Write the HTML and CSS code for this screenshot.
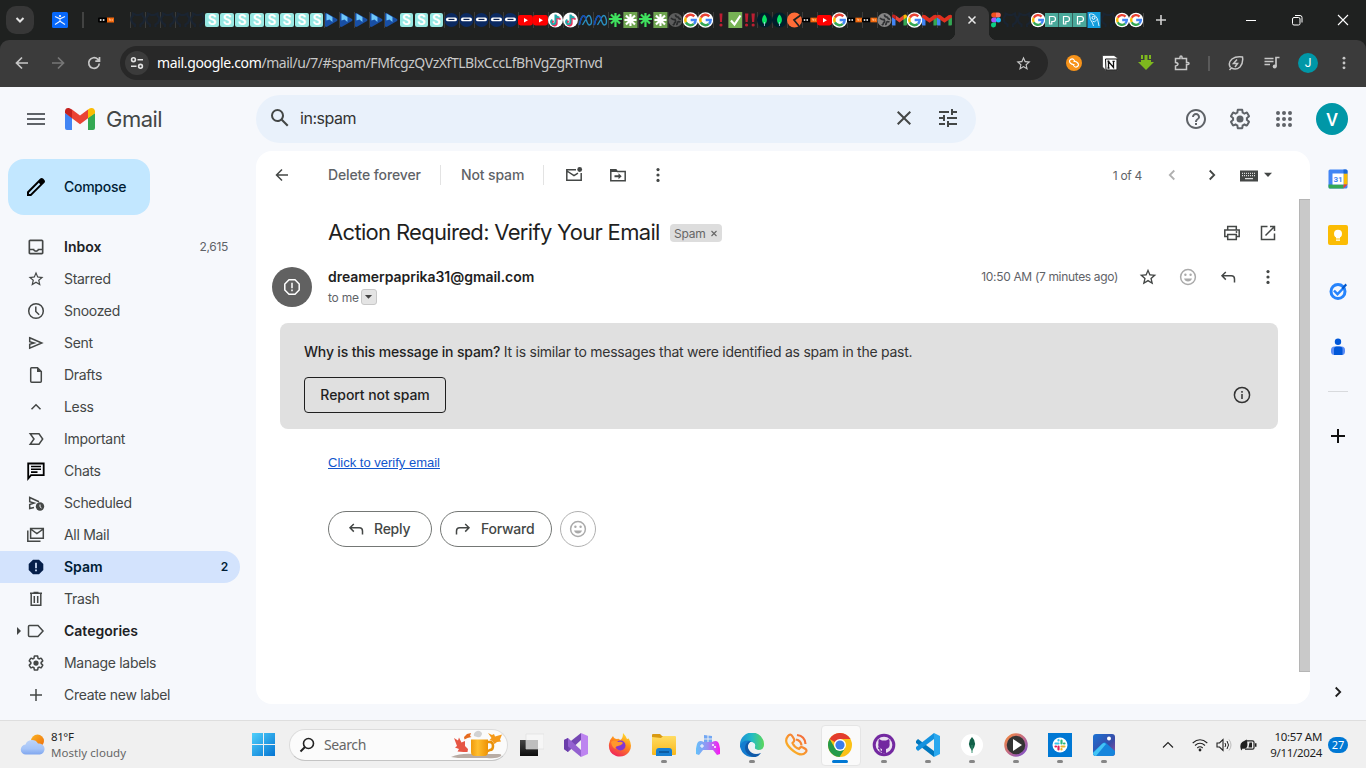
FILE: index.html
```html
<!DOCTYPE html>
<html lang="en">
<head>
<meta charset="utf-8">
<title>Gmail</title>
<link rel="stylesheet" href="styles.css">
</head>
<body>
<svg class="defs" aria-hidden="true">
  <defs>
    <linearGradient id="gWin" x1="0" y1="0" x2="1" y2="1"><stop offset="0" stop-color="#4fd0fb"/><stop offset="1" stop-color="#0474d2"/></linearGradient>
    <linearGradient id="gSun" x1="0" y1="0" x2="1" y2="1"><stop offset="0" stop-color="#fbb523"/><stop offset="1" stop-color="#ee6c0c"/></linearGradient>
    <linearGradient id="gCloud" x1="0" y1="0" x2="0" y2="1"><stop offset="0" stop-color="#bcd3f8"/><stop offset=".6" stop-color="#a5c4f8"/><stop offset="1" stop-color="#7fa6ee"/></linearGradient>
    <linearGradient id="gFold" x1="0" y1="0" x2="0" y2="1"><stop offset="0" stop-color="#ffdc63"/><stop offset="1" stop-color="#f9b81b"/></linearGradient>
    <linearGradient id="gPad"><stop offset="0" stop-color="#62c3fa"/><stop offset=".5" stop-color="#9a8df2"/><stop offset="1" stop-color="#ff12f2"/></linearGradient>
    <linearGradient id="gEdge" x1="0" y1="0" x2="1" y2="0"><stop offset="0" stop-color="#1a8fd8"/><stop offset=".5" stop-color="#23bcc5"/><stop offset="1" stop-color="#5bd75b"/></linearGradient>
    <linearGradient id="gCall" x1="0" y1="1" x2="1" y2="0"><stop offset="0" stop-color="#fdc51f"/><stop offset="1" stop-color="#f2603f"/></linearGradient>
    <linearGradient id="gRing" x1="0" y1="0" x2="1" y2="1"><stop offset="0" stop-color="#f58a3c"/><stop offset=".5" stop-color="#c26a86"/><stop offset="1" stop-color="#7a4fd0"/></linearGradient>
    <linearGradient id="gPhoto" x1="0" y1="0" x2="1" y2="1"><stop offset="0" stop-color="#1a72d4"/><stop offset=".6" stop-color="#3a4ba6"/><stop offset="1" stop-color="#9a4f9c"/></linearGradient>
    <linearGradient id="gFox" x1=".8" y1="0" x2=".3" y2="1"><stop offset="0" stop-color="#ffe52e"/><stop offset=".45" stop-color="#ff8a1c"/><stop offset="1" stop-color="#f0225b"/></linearGradient>
    <linearGradient id="gMug"><stop offset="0" stop-color="#f09a0c"/><stop offset=".4" stop-color="#ffbe2e"/><stop offset="1" stop-color="#ee9205"/></linearGradient>
    <linearGradient id="gDark" x1="0" y1="0" x2="0" y2="1"><stop offset="0" stop-color="#444"/><stop offset="1" stop-color="#0d0d0d"/></linearGradient>
  </defs>
  <symbol id="f-gh" viewBox="0 0 14 16"><path d="M4.500 15v-2.500C0 11 0 5 2.300 4L2.500 1.500 5.500 3h3.500l3-1.500.2 2.500c2.300 1 2.300 7-2.200 8.500V15" fill="none" stroke="#1a2431" stroke-width="2.200"/></symbol>
  <symbol id="f-arrow" viewBox="0 0 14 16"><path d="M.500 2Q1 .500 3 1.500l9.500 5.500q1 1 0 2L3 14.500Q1 15.500.500 14z" fill="#184fa5"/><path d="M2 1.500l6 3.500v5L5 7.500 2 8.500z" fill="#70c8fb"/></symbol>
  <symbol id="f-ninja" viewBox="0 0 14 16"><circle cx="7" cy="8" r="7" fill="#0b2a62"/><rect x="1.500" y="5.500" width="11" height="3.800" rx="1.900" fill="#fff"/><path d="M4 7.400h6" stroke="#0b2250" stroke-width="1.200"/></symbol>
  <symbol id="f-yt" viewBox="0 0 15 16"><rect y="3" width="15" height="10.500" rx="2.500" fill="#f00"/><path d="M6 6v4.600l4-2.300z" fill="#fff"/></symbol>
  <symbol id="f-tt" viewBox="0 0 15 16"><circle cx="7.500" cy="8" r="7.500" fill="#fff"/><g fill="none" stroke-width="2"><path d="M8 3v7.500a2.200 2.200 0 1 1-3-2.200M8 3q.500 3 4 3" stroke="#ee2b57" transform="translate(.7 .9)"/><path d="M8 3v7.500a2.200 2.200 0 1 1-3-2.200M8 3q.500 3 4 3" stroke="#23a8a8" transform="translate(-.5 -.4)"/></g></symbol>
  <symbol id="f-meta" viewBox="0 0 14 16"><path d="M.800 13C2 8 3.500 3.200 5.500 3.800 8 4.500 8 13 11 13c2.500 0 2.500-4.500 1-8-1.500-3-3.500-1-5 3L4 13" fill="none" stroke="#2a8fc0" stroke-width="1.400"/><path d="M.800 13C2 8 3.500 3.200 5.500 3.800 6.500 4 7 5.500 7.500 7.500" fill="none" stroke="#154bb5" stroke-width="1.500"/></symbol>
  <symbol id="f-star" viewBox="0 0 14 16"><path d="M7 1v14M.500 7h13M2.500 2.500l9 9M11.500 2.500l-9 9" stroke="#3fe25e" stroke-width="2.200"/></symbol>
  <symbol id="f-wstar" viewBox="0 0 14 16"><path d="M0 0h14v16H0z" fill="#6da34e"/><path d="M7 2v12M1 8h12M2.500 3.500l9 9M11.500 3.500l-9 9" stroke="#fff" stroke-width="2.200"/></symbol>
  <symbol id="f-globe" viewBox="0 0 14 16"><circle cx="7" cy="8" r="7" fill="#868686"/><path d="M2.500 6q2 2 4 1.500Q8 9.500 6 11q-.500 2.500-1.500 1M7 2.500q0 2.500 2.500 2.500 1 2 3 2.500M12 10q-2.500-1-3 .500 0 2-1.500 2" fill="none" stroke="#303234" stroke-width="1.700"/></symbol>
  <symbol id="f-g" viewBox=".5 0 15 16"><circle cx="8" cy="8" r="7.800" fill="#fff"/><g fill="none" stroke-width="2.500"><path d="M11.800 4.400A5.200 5.200 0 0 0 3.400 5.600" stroke="#ea4335"/><path d="M3.400 5.600a5.200 5.200 0 0 0 0 4.800" stroke="#fbbc05"/><path d="M3.400 10.400a5.200 5.200 0 0 0 8 1.500" stroke="#34a853"/><path d="M11.400 11.900A5.200 5.200 0 0 0 13.200 8H8.200" stroke="#4285f4"/></g></symbol>
  <symbol id="f-ex" viewBox="0 0 14 16"><path d="M6 1.500h3L8.500 10h-2z" fill="#bb1e32"/><circle cx="7.500" cy="13" r="1.600" fill="#bb1e32"/></symbol>
  <symbol id="f-ex2" viewBox="0 0 14 16"><path d="M2.500 1.500h3.400L5.200 10H3.100zM9 1.500h3.400l-.7 8.500H9.600z" fill="#bb1e32"/><circle cx="4.100" cy="13" r="1.600" fill="#bb1e32"/><circle cx="10.700" cy="13" r="1.600" fill="#bb1e32"/></symbol>
  <symbol id="f-check" viewBox="0 0 14 16"><path d="M0 0h14v16H0z" fill="#77b255"/><path d="M2.500 8.500l3.500 4 6-9" fill="none" stroke="#fff" stroke-width="2.200"/></symbol>
  <symbol id="f-mongo" viewBox="0 0 14 16"><circle cx="7" cy="8" r="7.500" fill="#001e2b"/><path d="M7 2.500C3.500 6 4 10.500 7 12.500c3-2 3.500-6.500 0-10z" fill="#08e162"/><path d="M7 10v4" stroke="#bce" stroke-width=".8"/></symbol>
  <symbol id="f-orange" viewBox="0 0 15 16"><circle cx="7.500" cy="8" r="7.500" fill="#ff6c37"/><path d="M14 3L7 8l5 6" fill="none" stroke="#202221" stroke-width="1.700"/></symbol>
  <symbol id="f-oreilly" viewBox="0 0 16 16"><rect y="5.500" width="9" height="5" rx="1" fill="#000"/><path d="M9 5.500h7v5H9z" fill="#f4690c"/><circle cx="2.700" cy="8" r="1" fill="#ddd"/><circle cx="5.600" cy="8" r="1" fill="#ddd"/><path d="M11 7h1v2M13.500 8H15" fill="none" stroke="#ffd7b5" stroke-width=".9"/></symbol>
  <symbol id="f-figma" viewBox="0 0 10 16"><path d="M2.700.500H5v5H2.700a2.500 2.500 0 0 1 0-5z" fill="#f24e1e"/><path d="M5 .500h2.300a2.500 2.500 0 0 1 0 5H5z" fill="#ff7262"/><path d="M2.700 5.500H5v5H2.700a2.500 2.500 0 0 1 0-5z" fill="#a259ff"/><circle cx="7.400" cy="8" r="2.500" fill="#1abcfe"/><path d="M2.700 10.500H5V13a2.500 2.500 0 1 1-2.300-2.500z" fill="#0acf83"/></symbol>
  <symbol id="f-p" viewBox="0 0 14 16"><path d="M0 1h13.500v14H0z" fill="#4aa99b"/><path d="M4.500 12V4.500H8q2.500 0 2.500 2.500T8 9.500H6.800V12z" fill="none" stroke="#fff" stroke-width="1.200"/></symbol>
  <symbol id="f-rocket" viewBox="0 0 13 16"><path d="M0 0h13v16H0z" fill="#129ddd"/><path d="M2 2q5-1 8 5l1.500 7M2 2q0 6 3 9l1 3M10 7l-3 3-2-1" fill="none" stroke="#d7f1ff"/><circle cx="6" cy="5.800" r="1.500" fill="none" stroke="#fff"/></symbol>
  <symbol id="f-mail" viewBox="0 0 30 22"><path d="M0 5v15q0 2 2 2h5V9.500z" fill="#4285f4"/><path d="M23 9.500V22h5q2 0 2-2V5z" fill="#34a853"/><path d="M7 10.200V1.500l8 6 8-6v8.700l-8 6z" fill="#ea4335"/><path d="M0 5.500V3Q.500-.500 4 .100L7 1.500v8.700L0 5z" fill="#c5221f"/><path d="M23 1.500l2-1.200Q29-.900 30 3v2.300l-7 5z" fill="#fbbc04"/></symbol>
  <symbol id="f-mred" viewBox="0 0 30 22"><path d="M0 5v15q0 2 2 2h5V9.500z" fill="#4285f4"/><path d="M23 9.500V22h5q2 0 2-2V5z" fill="#34a853"/><path d="M0 6V2q3-3 7-.500l8 6 8-6Q28-1 30 2v4l-7 5-8 5.500L7 11z" fill="#e0301f"/></symbol>

  <symbol id="menu" viewBox="0 0 24 24"><path d="M3 18h18v-2H3zm0-5h18v-2H3zm0-7v2h18V6z"/></symbol>
  <symbol id="search" viewBox="0 0 24 24"><path d="M20.490 19l-5.730-5.730C15.530 12.200 16 10.910 16 9.500A6.500 6.500 0 1 0 9.500 16c1.410 0 2.700-.47 3.770-1.240L19 20.490 20.490 19zM5 9.500C5 7.010 7.010 5 9.500 5S14 7.010 14 9.500 11.990 14 9.500 14 5 11.990 5 9.500z"/></symbol>
  <symbol id="close" viewBox="0 0 24 24"><path d="M19 6.410L17.590 5 12 10.590 6.410 5 5 6.410 10.590 12 5 17.590 6.410 19 12 13.410 17.590 19 19 17.590 13.410 12z"/></symbol>
  <symbol id="tune" viewBox="0 0 24 24"><path d="M3 17v2h6v-2H3zM3 5v2h10V5H3zm10 16v-2h8v-2h-8v-2h-2v6h2zM7 9v2H3v2h4v2h2V9H7zm14 4v-2H11v2h10zm-6-4h2V7h4V5h-4V3h-2v6z"/></symbol>
  <symbol id="help" viewBox="0 0 24 24"><path d="M11 18h2v-2h-2v2zm1-16C6.480 2 2 6.480 2 12s4.480 10 10 10 10-4.480 10-10S17.520 2 12 2zm0 18c-4.410 0-8-3.590-8-8s3.590-8 8-8 8 3.590 8 8-3.590 8-8 8zm0-14c-2.210 0-4 1.790-4 4h2c0-1.100.9-2 2-2s2 .9 2 2c0 2-3 1.750-3 5h2c0-2.250 3-2.500 3-5 0-2.210-1.790-4-4-4z"/></symbol>
  <symbol id="gear" viewBox="0 0 24 24"><path d="M13.850 22.250h-3.700c-.74 0-1.360-.54-1.450-1.270l-.27-1.890c-.27-.14-.53-.29-.79-.46l-1.800.72c-.7.26-1.470-.03-1.810-.65L2.200 15.530c-.35-.66-.2-1.440.36-1.880l1.530-1.190c-.01-.15-.02-.3-.02-.46 0-.15.010-.31.020-.46l-1.520-1.190c-.59-.45-.74-1.260-.37-1.880l1.850-3.190c.34-.62 1.110-.9 1.790-.63l1.810.73c.26-.17.520-.32.780-.46l.27-1.910c.09-.7.710-1.250 1.440-1.250h3.700c.74 0 1.360.54 1.450 1.270l.27 1.890c.27.14.530.29.790.46l1.800-.72c.71-.26 1.480.03 1.820.65l1.840 3.180c.36.66.2 1.440-.36 1.880l-1.520 1.190c.01.15.020.3.020.46s-.01.310-.02.46l1.520 1.190c.56.45.720 1.230.37 1.860l-1.860 3.220c-.34.620-1.110.9-1.800.63l-1.800-.72c-.26.17-.52.320-.78.460l-.27 1.910c-.1.680-.72 1.220-1.460 1.220zm-3.230-2h2.760l.37-2.550.53-.22c.44-.18.880-.44 1.340-.78l.45-.34 2.380.96 1.380-2.400-2.030-1.580.07-.56c.03-.26.060-.51.060-.78s-.03-.53-.06-.78l-.07-.56 2.030-1.580-1.390-2.400-2.390.96-.45-.35c-.42-.32-.87-.58-1.330-.77l-.52-.22-.37-2.550h-2.760l-.37 2.550-.53.210c-.44.190-.88.440-1.340.790l-.45.330-2.380-.95-1.390 2.390 2.030 1.580-.07.560a7 7 0 0 0-.06.790c0 .26.020.530.060.780l.07.560-2.030 1.580 1.380 2.400 2.390-.96.450.350c.43.330.86.580 1.330.770l.53.220.38 2.550z"/><circle cx="12" cy="12" r="3.500"/></symbol>
  <symbol id="apps" viewBox="0 0 24 24"><path d="M6 8a2 2 0 1 0 0-4 2 2 0 0 0 0 4m6 12a2 2 0 1 0 0-4 2 2 0 0 0 0 4m-6 0a2 2 0 1 0 0-4 2 2 0 0 0 0 4m0-6a2 2 0 1 0 0-4 2 2 0 0 0 0 4m6 0a2 2 0 1 0 0-4 2 2 0 0 0 0 4m4-8a2 2 0 1 0 4 0 2 2 0 0 0-4 0m-4 2a2 2 0 1 0 0-4 2 2 0 0 0 0 4m6 6a2 2 0 1 0 0-4 2 2 0 0 0 0 4m0 6a2 2 0 1 0 0-4 2 2 0 0 0 0 4"/></symbol>
  <symbol id="pen" viewBox="0 0 24 24"><path d="M20.410 4.940l-1.350-1.350c-.78-.78-2.050-.78-2.830 0L3 16.820V21h4.180L20.410 7.770c.79-.78.790-2.050 0-2.830zM6.410 19.060L5 19v-1.360l9.820-9.820 1.410 1.410-9.820 9.830z"/></symbol>
  <symbol id="inbox" viewBox="0 0 24 24"><path d="M19 3H5c-1.100 0-2 .9-2 2v14c0 1.100.9 2 2 2h14c1.100 0 2-.9 2-2V5c0-1.100-.9-2-2-2zm0 16H5v-3h3.560c.69 1.190 1.970 2 3.450 2s2.750-.81 3.450-2H19v3zm0-5h-4.990c0 1.100-.9 2-2 2s-2-.9-2-2H5V5h14v9z"/></symbol>
  <symbol id="star" viewBox="0 0 24 24"><path d="M22 9.240l-7.190-.62L12 2 9.190 8.630 2 9.240l5.460 4.730L5.820 21 12 17.270 18.180 21l-1.630-7.030L22 9.240zM12 15.400l-3.760 2.270 1-4.280-3.320-2.880 4.380-.38L12 6.100l1.710 4.040 4.380.38-3.320 2.880 1 4.280L12 15.400z"/></symbol>
  <symbol id="clock" viewBox="0 0 20 20"><circle cx="10" cy="10" r="7.300" class="s"/><path d="M9.800 5.500V10.500l3.400 3.200" class="s"/></symbol>
  <symbol id="sent" viewBox="0 0 20 20"><path d="M3.700 4.800L15.800 10 3.700 15.200V11.200L8 10 3.700 8.800z" class="s"/></symbol>
  <symbol id="draft" viewBox="0 0 20 20"><path d="M5.500 2.800H11.500L15.300 6.500V16.200q0 1-1 1H5.700q-1 0-1-1V3.800q0-1 .8-1z" class="s"/><path d="M11 2.500l4.500 4.500H11z"/></symbol>
  <symbol id="less" viewBox="0 0 20 20"><path d="M5.500 12.300L10 7.800l4.500 4.500" class="s"/></symbol>
  <symbol id="important" viewBox="0 0 20 20"><path d="M4.200 4.700H13L16.700 10 13 15.300H4.200L8 10z" class="s"/></symbol>
  <symbol id="chat" viewBox="0 0 20 20"><path d="M2.200 17.500V2.500h15.500v11.700H5z" fill="none" stroke="currentColor" stroke-width="1.800"/><path d="M5 5.500h10M5 8.300h10M5 11.100h6.500" stroke="currentColor" stroke-width="1.600"/></symbol>
  <symbol id="sched" viewBox="0 0 20 20"><path d="M8 14.500l-4.300 1V11.500L8 10 3.700 8.800V4.500L13 8.700" class="s"/><circle cx="14" cy="13.500" r="4.200"/><path d="M14 11.500v2.300l1.500 1.200" fill="none" stroke="#f6f8fc"/></symbol>
  <symbol id="all" viewBox="0 0 20 20"><path d="M4.600 3.500h12.700v9.800H4.600zM4.600 4l6.300 4.500L17.300 4M1.800 5.500v10.700h12.700" class="s"/></symbol>
  <symbol id="spam" viewBox="0 0 20 20"><path d="M7 2.700h6L17.300 7v6L13 17.300H7L2.700 13V7z"/><path d="M10 5.700v5.600M10 12.500v1.800" stroke="#d3e3fd" stroke-width="1.700"/></symbol>
  <symbol id="trash" viewBox="0 0 20 20"><path d="M4 4.300h12M7.500 3.500h5M5.200 4.500v11.700h9.600V4.500M8.300 7v7M11.700 7v7" class="s"/></symbol>
  <symbol id="tag" viewBox="0 0 20 20"><path d="M3.500 4.600H12L17 10l-5 5.400H3.500q-1 0-1-1V5.600q0-1 1-1z" class="s"/></symbol>
  <symbol id="plus" viewBox="0 0 20 20"><path d="M10 4v12M4 10h12" class="s"/></symbol>
  <symbol id="back" viewBox="0 0 20 20"><path d="M16 10H4.500M10 4.500L4.500 10 10 15.500" class="s"/></symbol>
  <symbol id="unread" viewBox="0 0 20 20"><path d="M12 4.800H2.800v10.400h14.400V8M3 6l7 4.700 4-2.500" class="s"/><circle cx="15.700" cy="4.500" r="2.400"/></symbol>
  <symbol id="move" viewBox="0 0 20 20"><path d="M2.800 4.800h5l1.500 1.700h7.900v9.200H2.800z" class="s"/><path d="M2 4h6l2 3H2zM6.500 10.200h4V8.200l3.200 3-3.200 3v-2h-4z"/></symbol>
  <symbol id="dots" viewBox="0 0 20 20"><circle cx="10" cy="4.600" r="1.600"/><circle cx="10" cy="10" r="1.600"/><circle cx="10" cy="15.400" r="1.600"/></symbol>
  <symbol id="chev" viewBox="0 0 20 20"><path d="M7.700 5.500l4.500 4.500-4.500 4.500" fill="none" stroke="currentColor" stroke-width="1.800"/></symbol>
  <symbol id="down" viewBox="0 0 10 6"><path d="M1 .800h8L5 5z"/></symbol>
  <symbol id="kbd" viewBox="0 0 18 12"><path d="M0 .500h18v11H0z"/><path d="M2 3.300h14M2 5.700h14" stroke="#fff" stroke-dasharray="1 1"/><path d="M5 8.700h8" stroke="#fff"/></symbol>
  <symbol id="print" viewBox="0 0 20 20"><path d="M5.700 6.500V3.500h8.600v3M5.700 13.500H2.800V7h14.400v6.500h-2.900M5.700 11.500h8.600v5H5.700z" class="s"/><circle cx="14.500" cy="9" r=".9"/></symbol>
  <symbol id="open" viewBox="0 0 20 20"><path d="M9.500 3.500h-6v13h13v-6M12 3.500h4.500V8M16.500 3.500L7.500 12.500" class="s"/></symbol>
  <symbol id="smile" viewBox="0 0 20 20"><circle cx="10" cy="10" r="7.400" class="s"/><circle cx="7.400" cy="7.800" r="1.200"/><circle cx="12.600" cy="7.800" r="1.200"/><path d="M6 11.600h8q-1 3-4 3t-4-3z"/></symbol>
  <symbol id="reply" viewBox="0 0 20 20"><path d="M16.500 15.500V12q0-3.200-3.200-3.200H4.200M7.800 5L4 8.800l3.800 3.800" class="s"/></symbol>
  <symbol id="oct" viewBox="0 0 20 20"><path d="M7 2.800h6L17.200 7v6L13 17.200H7L2.800 13V7zM10 5.800v5.400M10 12.500v1.700" class="s"/></symbol>
  <symbol id="info" viewBox="0 0 20 20"><circle cx="10" cy="10" r="7.600" class="s"/><path d="M10 9v5M10 6v1.700" class="s"/></symbol>
</svg>

<header class="tabstrip">
  <div class="tab-search"><svg width="12" height="12" viewBox="0 0 12 12"><path d="M2.500 4L6 7.500 9.500 4" fill="none" stroke="#e3e3e3" stroke-width="2"/></svg></div>
  <div class="pinned"><svg width="16" height="16" viewBox="0 0 16 16"><rect width="16" height="16" rx="1.500" fill="#0768fa"/><path d="M3 4.500l5 2.300 5-2.300M8 6.500v3M3 12.500l5-3.300 5 3.300" fill="none" stroke="#e8f0ff" stroke-width="1.100"/><circle cx="8" cy="4" r="1.100" fill="#fff"/></svg></div>
  <i class="pin-sep"></i>
  <svg class="pin-or"><use href="#f-oreilly"/></svg>
  <div class="favs">
    <svg><use href="#f-gh"/></svg><svg><use href="#f-gh"/></svg><svg><use href="#f-gh"/></svg><svg><use href="#f-gh"/></svg><svg><use href="#f-gh"/></svg>
    <b>S</b><b>S</b><b>S</b><b>S</b><b>S</b><b>S</b><b>S</b><b>S</b>
    <svg><use href="#f-arrow"/></svg><svg><use href="#f-arrow"/></svg><svg><use href="#f-arrow"/></svg><svg><use href="#f-arrow"/></svg><svg><use href="#f-arrow"/></svg>
    <b>S</b><b>S</b><b>S</b>
    <svg><use href="#f-ninja"/></svg><svg><use href="#f-ninja"/></svg><svg><use href="#f-ninja"/></svg><svg><use href="#f-ninja"/></svg><svg><use href="#f-ninja"/></svg>
    <svg><use href="#f-yt"/></svg><svg><use href="#f-yt"/></svg><svg><use href="#f-tt"/></svg><svg><use href="#f-tt"/></svg><svg><use href="#f-meta"/></svg><svg><use href="#f-meta"/></svg>
    <svg><use href="#f-star"/></svg><svg><use href="#f-wstar"/></svg><svg><use href="#f-star"/></svg><svg><use href="#f-wstar"/></svg><svg class="dim"><use href="#f-globe"/></svg>
    <svg><use href="#f-g"/></svg><svg><use href="#f-g"/></svg><svg><use href="#f-ex"/></svg><svg><use href="#f-check"/></svg><svg><use href="#f-ex2"/></svg>
    <svg><use href="#f-mongo"/></svg><svg><use href="#f-mongo"/></svg><svg><use href="#f-orange"/></svg><svg><use href="#f-oreilly"/></svg><svg><use href="#f-yt"/></svg><svg><use href="#f-g"/></svg>
    <svg><use href="#f-oreilly"/></svg><svg><use href="#f-oreilly"/></svg><svg><use href="#f-globe"/></svg><svg><use href="#f-mail"/></svg><svg><use href="#f-g"/></svg><svg><use href="#f-mred"/></svg><svg><use href="#f-mred"/></svg>
  </div>
  <div class="active-tab"><svg width="10" height="10" viewBox="0 0 10 10"><path d="M1.500 1.500l7 7M8.500 1.500l-7 7" stroke="#e8e8e8" stroke-width="1.500"/></svg></div>
  <div class="favs right">
    <svg><use href="#f-figma"/></svg><svg><use href="#f-gh"/></svg><svg><use href="#f-gh"/></svg><svg><use href="#f-g"/></svg><svg><use href="#f-p"/></svg><svg><use href="#f-p"/></svg><svg><use href="#f-p"/></svg><svg><use href="#f-rocket"/></svg><svg><use href="#f-gh"/></svg><svg><use href="#f-g"/></svg><svg><use href="#f-g"/></svg>
  </div>
  <i class="end-sep"></i>
  <svg class="newtab" viewBox="0 0 12 12"><path d="M6 1v10M1 6h10" stroke="#d0d0d0" stroke-width="1.600"/></svg>
  <div class="winctl">
    <svg viewBox="0 0 12 12"><path d="M1 6.500h10" stroke="#fff"/></svg>
    <svg viewBox="0 0 12 12"><rect x="1.500" y="3.500" width="7.500" height="7.500" rx="1.500" fill="none" stroke="#fff"/><path d="M4 1.500h5q2 0 2 2v5" fill="none" stroke="#fff"/></svg>
    <svg viewBox="0 0 12 12"><path d="M1 1l10 10M11 1L1 11" stroke="#fff" stroke-width="1.100"/></svg>
  </div>
</header>

<div class="toolbar-bg">
<nav class="toolbar">
  <svg class="nav-i" viewBox="0 0 16 16"><path d="M14 8H3M8 2.500L2.500 8 8 13.500" fill="none" stroke="#c7c7c7" stroke-width="1.700"/></svg>
  <svg class="nav-i" viewBox="0 0 16 16"><path d="M2 8h11M8 2.500L13.500 8 8 13.500" fill="none" stroke="#777" stroke-width="1.700"/></svg>
  <svg class="nav-i" viewBox="0 0 16 16"><path d="M13.300 8.500a5.300 5.300 0 1 1-1.600-4.300L13.500 6M13.500 2v4.200H9.300" fill="none" stroke="#c7c7c7" stroke-width="1.700"/></svg>
  <div class="omnibox">
    <span class="site"><svg width="16" height="16" viewBox="0 0 16 16" fill="none" stroke="#e3e3e3" stroke-width="1.600"><circle cx="4.500" cy="4.700" r="1.900"/><path d="M8.500 4.700H14M2 11.300h5.500"/><circle cx="11.500" cy="11.300" r="1.900"/></svg></span>
    <span class="url"><b>mail.google.com</b>/mail/u/7/#spam/FMfcgzQVzXfTLBlxCccLfBhVgZgRTnvd</span>
    <svg class="bm" fill="#c7c7c7"><use href="#star"/></svg>
  </div>
  <div class="exts">
    <svg viewBox="0 0 16 16"><circle cx="8" cy="8" r="8" fill="#f7931a"/><path d="M8.500 9.500Q6 10 4.300 8T4.500 4.500t3.500.500L9.500 7M7.500 6.500Q10 6 11.700 8t-.2 3.500T8 11L6.500 9" fill="none" stroke="#fff" stroke-width="1.200"/></svg>
    <svg viewBox="0 0 16 16"><path d="M1 .500h11l3.500 2.500v12.500H4L.500 12V1z" fill="#fff" stroke="#111" stroke-width=".5"/><path d="M3.500 4h11.500v11H4z" fill="#fff" stroke="#111"/><path d="M6.500 13V6.500l5 6V6M5.500 6.500h2M10.500 6.300h2.200M5.500 13h2" fill="none" stroke="#111" stroke-width="1.300"/></svg>
    <svg viewBox="0 0 16 16"><path d="M3 0h2v4H3zM6.500 0h3v6h-3zM11 0h2v4h-2zM3 5h10v2h3l-8 8-8-8h3z" fill="#7eb81e"/></svg>
    <svg viewBox="0 0 16 16"><path d="M1.500 3.500H6V2q0-1 1-1t1 1v1.500h4.500v4H14q1 0 1 1t-1 1h-1.500v5h-11v-3.500q2.500-.500 2.500-1.800T1.500 7.500z" fill="none" stroke="#c7c7c7" stroke-width="1.500"/></svg>
    <i></i>
    <svg viewBox="0 0 16 16"><path d="M2.500 12.500Q-.500 8 4 4q4-3 10.500-2Q15.500 8 12 12q-4 3.500-8.500 1l-2 2M9 4.500L5.500 8.500h4L7 12" fill="none" stroke="#c7c7c7" stroke-width="1.500"/></svg>
    <svg viewBox="0 0 16 16"><path d="M.500 3.500h9M.500 6.500h9M.500 9.500H6M12 11.500v-9h3.500" fill="none" stroke="#c7c7c7" stroke-width="1.700"/><circle cx="10.700" cy="11.500" r="2" fill="#c7c7c7"/></svg>
    <span class="profile">J</span>
    <svg class="more" viewBox="0 0 20 20" fill="#c7c7c7"><use href="#dots"/></svg>
  </div>
</nav>
</div>

<main class="app">
  <aside class="sidebar">
    <div class="brand"><svg class="burger"><use href="#menu"/></svg><svg class="mlogo"><use href="#f-mail"/></svg><span>Gmail</span></div>
    <button class="compose"><svg><use href="#pen"/></svg><span>Compose</span></button>
    <ul class="folders">
      <li class="bold"><svg><use href="#inbox"/></svg><span>Inbox</span><em>2,615</em></li>
      <li><svg class="st"><use href="#star"/></svg><span>Starred</span></li>
      <li><svg><use href="#clock"/></svg><span>Snoozed</span></li>
      <li><svg><use href="#sent"/></svg><span>Sent</span></li>
      <li><svg><use href="#draft"/></svg><span>Drafts</span></li>
      <li><svg><use href="#less"/></svg><span>Less</span></li>
      <li><svg><use href="#important"/></svg><span>Important</span></li>
      <li><svg class="black"><use href="#chat"/></svg><span>Chats</span></li>
      <li><svg><use href="#sched"/></svg><span>Scheduled</span></li>
      <li><svg><use href="#all"/></svg><span>All Mail</span></li>
      <li class="bold current"><svg><use href="#spam"/></svg><span>Spam</span><em>2</em></li>
      <li><svg><use href="#trash"/></svg><span>Trash</span></li>
      <li class="bold expandable"><svg><use href="#tag"/></svg><span>Categories</span></li>
      <li><svg class="st"><use href="#gear"/></svg><span>Manage labels</span></li>
      <li><svg><use href="#plus"/></svg><span>Create new label</span></li>
    </ul>
  </aside>

  <section class="center">
    <div class="searchrow">
      <div class="search"><svg><use href="#search"/></svg><span>in:spam</span><svg><use href="#close"/></svg><svg><use href="#tune"/></svg></div>
      <div class="account"><svg><use href="#help"/></svg><svg><use href="#gear"/></svg><svg><use href="#apps"/></svg><span>V</span></div>
    </div>
    <div class="body">
      <article class="panel">
        <div class="actions">
          <svg class="a-back"><use href="#back"/></svg>
          <span class="act del">Delete forever</span><i></i><span class="act not">Not spam</span><i></i>
          <svg class="a1"><use href="#unread"/></svg><svg class="a2"><use href="#move"/></svg><svg class="a3"><use href="#dots"/></svg>
          <span class="count">1 of 4</span>
          <svg class="prev"><use href="#chev"/></svg><svg class="next"><use href="#chev"/></svg>
          <svg class="kbd"><use href="#kbd"/></svg><svg class="dn"><use href="#down"/></svg>
        </div>
        <div class="scroll">
          <div class="message">
            <div class="subject"><h1>Action Required: Verify Your Email</h1><span class="chip">Spam<svg viewBox="0 0 8 8"><path d="M1.500 2l5 5M6.500 2l-5 5" stroke="#666" stroke-width="1.100"/></svg></span><div class="sub-i"><svg><use href="#print"/></svg><svg><use href="#open"/></svg></div></div>
            <div class="sender">
              <span class="avatar"><svg><use href="#oct"/></svg></span>
              <div class="who"><strong>dreamerpaprika31@gmail.com</strong><div class="tome">to me<span><svg><use href="#down"/></svg></span></div></div>
              <div class="meta"><time>10:50 AM (7 minutes ago)</time><svg class="st"><use href="#star"/></svg><svg class="grey"><use href="#smile"/></svg><svg><use href="#reply"/></svg><svg><use href="#dots"/></svg></div>
            </div>
            <div class="banner">
              <p><b>Why is this message in spam?</b> <span>It is similar to messages that were identified as spam in the past.</span></p>
              <div class="brow"><button>Report not spam</button><svg><use href="#info"/></svg></div>
            </div>
            <a class="verify">Click to verify email</a>
            <div class="replies">
              <button class="r"><svg><use href="#reply"/></svg><span>Reply</span></button>
              <button class="f"><svg class="flip"><use href="#reply"/></svg><span>Forward</span></button>
              <button class="e"><svg><use href="#smile"/></svg></button>
            </div>
          </div>
          <div class="bar"></div>
        </div>
      </article>
      <aside class="rail">
        <svg viewBox="0 0 20 20"><rect x=".500" y=".500" width="19" height="19" rx="1.500" fill="#4285f4"/><path d="M15.500 4.500h4v11h-4z" fill="#fbbc04"/><path d="M.500 15.500h15v4H2q-1.500 0-1.500-1.500z" fill="#34a853"/><path d="M15.500 15.500h4l-4 4z" fill="#ea4335"/><path d="M15.500.500H18q1.500 0 1.500 1.500v2.500h-4z" fill="#1967d2"/><path d="M4.500 4.500h11v11h-11z" fill="#fff"/><text x="10" y="13" font-size="8" font-weight="700" text-anchor="middle" fill="#4285f4">31</text></svg>
        <svg viewBox="0 0 20 20"><rect width="20" height="20" rx="2" fill="#fbbc04"/><circle cx="10" cy="8.800" r="4" fill="#fff"/><path d="M8 11h4v2.500H8zM8 14.500h4v1.200H8z" fill="#fff"/></svg>
        <svg viewBox="0 0 20 20"><circle cx="10" cy="10.500" r="7" fill="none" stroke="#2684fc" stroke-width="3"/><path d="M6 9.500l3.500 3.700L16 6.500" fill="none" stroke="#2684fc" stroke-width="2.500"/><path d="M13.500 7L17.500 2.500l1.500 1.700-4 4.300z" fill="#0057cc"/></svg>
        <svg viewBox="0 0 20 20"><circle cx="10" cy="4.800" r="3.200" fill="#0057d8"/><rect x="3" y="9.500" width="14" height="8.500" rx="3.500" fill="#5c8df5"/><path d="M6 18V12q0-2.500 2.500-2.500h3Q14.500 9.500 14.500 12v6z" fill="#0057d8"/></svg>
        <i></i>
        <svg class="add" viewBox="0 0 20 20"><path d="M10 3v14M3 10h14" stroke="#111" stroke-width="2"/></svg>
        <svg class="hide"><use href="#chev"/></svg>
      </aside>
    </div>
  </section>
</main>

<footer class="taskbar">
  <div class="weather"><svg width="26" height="24" viewBox="0 0 26 24"><circle cx="17.500" cy="8" r="6.500" fill="url(#gSun)"/><path d="M6 21.500a5 5 0 0 1-.500-10 7 7 0 0 1 12.500-1 5.500 5.500 0 0 1 2 11z" fill="url(#gCloud)"/></svg><div><p>81°F</p><p class="sub">Mostly cloudy</p></div></div>
  <svg class="start" viewBox="0 0 23 23"><path d="M0 0h11v11H0zM12 0h11v11H12zM0 12h11v11H0zM12 12h11v11H12z" fill="url(#gWin)"/></svg>
  <div class="tsearch"><svg width="16" height="16" viewBox="0 0 16 16"><circle cx="9.500" cy="6.500" r="5" fill="none" stroke="#222" stroke-width="1.600"/><path d="M6 10L1.500 14.500" stroke="#222" stroke-width="2"/></svg><span>Search</span>
    <svg class="autumn" width="54" height="30" viewBox="0 0 54 30"><path d="M1 27q10-4 22-3h26q3 0 2 2-4 3-14 2H8z" fill="#b8aca4"/><path d="M4 8l4 2.500 1-3 2.500 5 3.500-1.500v5l3 3-.500 3h-4l-6-.500 1.500-2.500-4-1.500 2-1.500z" fill="#e65544"/><path d="M14 7l3-3 4-1-1 3 1.500 1-4 1-3 1.500z" fill="#e56a1e"/><path d="M38 3l4 2 2-1 1 2.500 7-2-2 5 1 2-4 .5-2.500 2-2-3-3-1 2-2z" fill="#f59a1b"/><path d="M24 6q-1-3 3-5 2-1 4 1 2 1 0 4-1 2-4 1z" fill="#d2d2d2"/><path d="M37 12h3q3 0 3 4t-3 4l-4 2" fill="none" stroke="#e8920c" stroke-width="2.500"/><path d="M21 9.500h17V22q0 4-4 4H25q-4 0-4-4z" fill="url(#gMug)"/></svg>
  </div>
  <div class="apps">
    <div><svg viewBox="0 0 24 24"><path d="M0 7h18v16H0z" fill="url(#gDark)"/><path d="M6 1h18v15H6z" fill="#f6f6f6" stroke="#ddd" stroke-width=".6"/><path d="M6 7h12v9H6z" fill="#bebebe"/></svg></div>
    <div><svg viewBox="0 0 24 24"><path d="M17 0l7 3v18l-7 3z" fill="#bd84f0"/><path d="M17 0v7L4 19l-4-3v-2.500z" fill="#7547b3"/><path d="M4 5l13 12v7L0 10V7z" fill="#9461d0"/><path d="M0 7l4-2v14l-4-3z" fill="#6b3eaa"/></svg></div>
    <div><svg viewBox="0 0 24 24"><path d="M5 3q1 3 4 3 2-1 3 1 3-1 3-7 3 3 4 6 2-1 2 0 4 7 0 13-5 6-13 4Q0 20 1 11q1-5 4-8z" fill="url(#gFox)"/><circle cx="12.500" cy="12.500" r="5" fill="#8536cf"/><path d="M3 9q3-3 7 0 4-1 5 1-2 3-5 3-4 1-2 3-4-1-5-7z" fill="#ff972c"/></svg></div>
    <div class="run"><svg viewBox="0 0 24 24"><path d="M0 2q0-1 1-1h7l3 3v5H0z" fill="#d99a13"/><rect y="3" width="24" height="19" rx="1" fill="url(#gFold)"/><path d="M0 4l9 1 2-2H0z" fill="#d99a13"/><path d="M4 23v-5q0-3 3-3h10q3 0 3 3v5z" fill="#187fd2"/><path d="M7 19h10" stroke="#085193" stroke-width="1.500"/></svg></div>
    <div><svg viewBox="0 0 24 24"><path d="M8 2l8 1v8l-8-1z" fill="#72a7f3"/><path d="M12 2v8M8 6h8" stroke="#eee"/><path d="M1 11q1.500-5 7-2h8q5.500-3 7 2 2 8 1 10l-3 1-4-5H7l-4 5-3-1q-1-2 1-10z" fill="url(#gPad)"/><path d="M4 13h4M6 11v4" stroke="#fff"/><circle cx="17" cy="12" r="1" fill="#fff"/><circle cx="19" cy="14" r="1" fill="#fff"/></svg></div>
    <div class="run"><svg viewBox="0 0 24 24"><path d="M0 11A12 12 0 0 1 24 12q0 5-6 5-4-.500-3-3.500 1-4-5-4.500Q3 9 0 15z" fill="url(#gEdge)"/><path d="M0 13q3-7 11-5-4 3-3 8 2 6 8 6 3 0 5-2Q15 26 7 23q-6-3-7-10z" fill="#137ccf"/><path d="M11 8q-5 4-2 9 4 6 12 3-5 7-12 2-6-5-3-11 2-3 5-3z" fill="#105aa9"/><path d="M11 9q5 1 4 5-2 3 3 3-5 1-7-2-1-3 0-6z" fill="#e8f4f8"/></svg></div>
    <div><svg viewBox="0 0 24 24"><path d="M4 3q2.500-3 4.500.500L10 6q1 2-1.500 4 2 4.500 6.500 6 2-3 4-1.500l2.500 1.500q2 1.500 0 3.500-4 4.500-12-1.500Q-1.500 9.500 4 3zM12 6.500q5 1 5.500 6M13 2q8 1 8.500 9" fill="none" stroke="url(#gCall)" stroke-width="2.200"/></svg></div>
    <div class="on"><svg viewBox="0 0 24 24"><circle cx="12" cy="12" r="12" fill="#fbc116"/><path d="M12 12L1.600 6A12 12 0 0 1 22.400 6H12z" fill="#e33b2e"/><path d="M1.600 6A12 12 0 0 0 11.500 24L17.200 15 12 12 7 15z" fill="#259b4a"/><circle cx="12" cy="12" r="6" fill="#fff"/><circle cx="12" cy="12" r="4.600" fill="#3b7ded"/></svg></div>
    <div class="run"><svg viewBox="0 0 24 24"><circle cx="12" cy="12" r="11.300" fill="#7328a0"/><circle cx="12" cy="12" r="8.300" fill="#eadff0"/><path d="M7 6l3 1.500h4L17 6q1 2 .500 4 1 5-3.500 6v4h-4v-4q-5-1-3.500-6Q6 8 7 6z" fill="#7328a0"/><path d="M6 15q2 0 2 2t3 1" fill="none" stroke="#7328a0" stroke-width="1.300"/></svg></div>
    <div class="run"><svg viewBox="0 0 24 24"><path d="M0 8l2-2 16 12V24L0 10z" fill="#0077bd"/><path d="M0 16l2 2L18 6V0L0 14z" fill="#1492df"/><path d="M18 0l6 3v18l-6 3z" fill="#29a8ef"/></svg></div>
    <div class="run"><svg viewBox="0 0 24 24"><circle cx="12" cy="12" r="11" fill="#fff"/><path d="M12 4q-6 6 0 14 6-8 0-14z" fill="#116149"/><path d="M12 12v8" stroke="#3b9272"/></svg></div>
    <div class="run"><svg viewBox="0 0 24 24"><circle cx="12" cy="12" r="10.500" fill="#343434" stroke="url(#gRing)" stroke-width="2.500"/><path d="M9 6v12l9-6z" fill="#fff"/></svg></div>
    <div class="run"><svg viewBox="0 0 24 24"><path d="M0 0h24v24H0z" fill="#0078d4"/><circle cx="12" cy="12" r="7.500" fill="#fff"/><g fill="none" stroke-width="2.200" stroke-linecap="round"><path d="M10.500 7v.5M7.500 10.500h3" stroke="#36c5f0"/><path d="M13.500 7.500v3M16 10.500h.5" stroke="#2eb67d"/><path d="M13.500 13.500h3M13.500 16v.5" stroke="#ecb22e"/><path d="M10.500 13.500v3M7.500 13.500h.5" stroke="#e01e5a"/></g></svg></div>
    <div class="run"><svg viewBox="0 0 24 24"><rect x="1" y="1" width="22" height="22" rx="3" fill="url(#gPhoto)"/><path d="M1 19l10-9q1.500-1.500 3 0l9 8v2q0 3-3 3H4q-3 0-3-3z" fill="#1685dc"/><path d="M1 20l9-9q2-2 4 0L4 23q-3 0-3-3z" fill="#43c4f5"/><circle cx="17" cy="5.500" r="2" fill="#fff"/></svg></div>
  </div>
  <div class="tray">
    <svg class="up" viewBox="0 0 12 12"><path d="M1 8.500L6 3.500l5 5" fill="none" stroke="#222" stroke-width="1.100"/></svg>
    <svg class="wifi" viewBox="0 0 16 14"><g fill="none" stroke="#222" stroke-width="1.100"><path d="M.700 5q7.300-6.500 14.600 0M3 7.500q5-4.500 10 0M5.300 10q2.700-2.500 5.400 0"/></g><circle cx="8" cy="12" r="1.400" fill="#222"/></svg>
    <svg class="vol" viewBox="0 0 16 14"><path d="M1 5h2.500L7 1.500v11L3.500 9H1z" fill="none" stroke="#222" stroke-width="1.100"/><path d="M9 5q1.500 2 0 4M11 3q3 4 0 8" fill="none" stroke="#222"/><path d="M13 1.500q4 5.500 0 11" fill="none" stroke="#bbb"/></svg>
    <svg class="bat" viewBox="0 0 17 14"><path d="M7 2.800h5.500q1.500 0 1.500 1.500v5.400q0 1.500-1.500 1.500H5" fill="none" stroke="#222" stroke-width="1.200"/><path d="M9.500 4.500H12v5H8.500zM15 5.300h1.500v3.400H15z" fill="#222"/><path d="M1.200 12.500q-2.200-6 1-8.500 1.500-1 4.500-2.500 1.500 6 0 8-1.500 1.700-4 1z" fill="#222"/></svg>
    <div class="clock"><p>10:57 AM</p><p>9/11/2024</p></div>
    <span class="badge">27</span>
  </div>
</footer>
</body>
</html>
```
FILE: styles.css
```css
* { box-sizing: border-box; }
body { margin: 0; width: 1366px; height: 768px; overflow: hidden; display: flex; flex-direction: column; background: #f6f8fc; font-family: Inter, Roboto, sans-serif; color: #444746; font-size: 14px; }
svg { display: block; flex: none; }
p, h1, ul { margin: 0; padding: 0; font-weight: 400; list-style: none; }
button { font: inherit; color: inherit; background: none; border: 0; padding: 0; }
em { font-style: normal; }
.defs { width: 0; height: 0; position: absolute; }
.s { fill: none; stroke: currentColor; stroke-width: 1.5; }

/* browser tab strip */
.tabstrip { height: 40px; background: #1f2120; display: flex; align-items: center; flex: none; }
.tab-search { width: 28px; height: 28px; margin-left: 6px; border-radius: 10px; background: #373737; display: grid; place-items: center; }
.pinned { margin-left: 18px; }
.pin-sep { width: 2px; height: 16px; background: #424342; margin-left: 14px; }
.pin-or { width: 16px; height: 16px; margin-left: 14px; }
.favs { display: flex; height: 16px; margin-left: 16px; width: 823px; }
.favs svg { width: 15px; height: 16px; flex: 0 0 14.95px; background: linear-gradient(#3b3c3b, #3b3c3b) 0 0 / 1px 16px no-repeat; }
.favs b { flex: 0 0 13.45px; height: 14px; margin: 1px .75px; border-radius: 2px; background: #97e8e2; color: #fff; font: 700 14px/14px Roboto, sans-serif; text-align: center; }
.favs .dim { opacity: .6; }
.favs.right { width: 154px; margin-left: 0; }
.favs.right svg { flex-basis: 14px; width: 14px; background: none; }
.end-sep { width: 1px; height: 14px; background: #454645; }
.active-tab { position: relative; width: 34px; height: 34px; align-self: flex-end; background: #3b3b3b; border-radius: 9px 9px 0 0; display: grid; place-items: center; margin-left: 2px; padding-bottom: 6px; }
.active-tab::before, .active-tab::after { content: ""; position: absolute; bottom: 0; width: 8px; height: 8px; }
.active-tab::before { left: -8px; background: radial-gradient(circle at 0 0, transparent 8px, #3b3b3b 8.5px); }
.active-tab::after { right: -8px; background: radial-gradient(circle at 100% 0, transparent 8px, #3b3b3b 8.5px); }
.newtab { width: 12px; height: 12px; margin-left: 11px; }
.winctl { display: flex; gap: 34px; margin-left: auto; padding-right: 17px; }
.winctl svg { width: 12px; height: 12px; }

/* browser toolbar */
.toolbar-bg { background: #1f2120; flex: none; }
.toolbar { height: 47px; border-radius: 9px 9px 0 0; background: #3b3b3b; display: flex; align-items: center; padding: 0 0 1px 14px; }
.nav-i { width: 16px; height: 16px; margin-right: 20px; }
.omnibox { width: 928px; height: 34px; border-radius: 17px; background: #282828; display: flex; align-items: center; padding: 0 16px 0 5px; margin-left: -2px; }
.site { width: 24px; height: 24px; border-radius: 50%; background: #3b3b3b; display: grid; place-items: center; }
.url { font: 14px "Noto Sans", sans-serif; letter-spacing: -.45px; color: #c7c7c7; margin-left: 8px; padding-bottom: 1px; }
.url b { font-weight: 400; color: #fff; letter-spacing: -.35px; }
.bm { width: 17px; height: 17px; margin-left: auto; }
.exts { display: flex; align-items: center; margin-left: 18px; gap: 20px; }
.exts svg { width: 16px; height: 16px; }
.exts .more { width: 18px; height: 18px; margin: 0 -1px; }
.exts i { width: 2px; height: 15px; background: #5a5a5a; margin: 0 -2px; }
.profile { width: 20px; height: 20px; border-radius: 50%; background: #0097a7; color: #fff; font: 12px/20px Roboto, sans-serif; text-align: center; margin: 0 -2px; }

/* mail app */
.app { height: 633px; display: flex; flex: none; }
.sidebar { width: 256px; flex: none; }
.brand { height: 64px; display: flex; align-items: center; padding-left: 24px; }
.burger { width: 24px; height: 24px; fill: #5f6368; }
.mlogo { width: 30px; height: 22px; margin-left: 17px; }
.brand span { font-size: 22px; letter-spacing: -.5px; color: #444746; margin-left: 11px; }
.compose { margin: 8px 0 16px 8px; width: 142px; height: 56px; border-radius: 16px; background: #c2e7ff; color: #001d35; font-weight: 500; display: flex; align-items: center; gap: 16px; padding-left: 16px; letter-spacing: -.27px; }
.compose span { padding-bottom: 2px; }
.compose svg { width: 24px; height: 24px; fill: #000; }
.folders li { position: relative; height: 32px; width: 240px; display: flex; align-items: center; padding: 0 12px 0 26px; border-radius: 0 16px 16px 0; letter-spacing: -.3px; }
.folders span { padding-bottom: 2px; }
.folders svg { width: 20px; height: 20px; fill: #444746; color: #444746; margin-right: 18px; }
.folders svg.st { width: 18px; height: 18px; margin: 0 19px 0 1px; }
.folders svg.black { color: #000; }
.folders em { margin-left: auto; font-size: 12px; padding-bottom: 1px; }
.folders .bold { font-weight: 600; color: #202124; letter-spacing: 0; }
.bold em { font-weight: 400; color: #5f6368; letter-spacing: -.3px; }
.folders .current { background: #d3e3fd; color: #001d35; }
.folders .current svg { fill: #041e49; }
.current em { font-weight: 600; color: #001d35; }
.expandable::before { content: ""; position: absolute; left: 17px; top: 12px; border: 4px solid transparent; border-left-color: #444746; border-right: 0; }

.center { flex: 1; display: flex; flex-direction: column; min-width: 0; }
.searchrow { height: 64px; display: flex; align-items: center; }
.search { width: 720px; height: 48px; border-radius: 24px; background: #e9f1fb; display: flex; align-items: center; padding: 0 16px 2px 12px; fill: #444746; }
.search svg { width: 24px; height: 24px; }
.search span { margin-left: 8px; flex: 1; font-size: 16px; letter-spacing: -.45px; color: #333; }
.search svg:last-child { margin-left: 20px; }
.account { display: flex; align-items: center; gap: 20px; margin-left: auto; padding-right: 18px; fill: #5f6368; }
.account svg { width: 24px; height: 24px; }
.account span { width: 32px; height: 32px; border-radius: 50%; background: #0097a7; color: #fff; font: 500 18px/33px Roboto, sans-serif; text-align: center; }
.body { display: flex; height: 553px; }
.panel { width: 1054px; border-radius: 16px; background: #fff; overflow: hidden; flex: none; }
.actions { height: 48px; display: flex; align-items: center; padding-left: 16px; fill: #444746; }
.actions svg { width: 20px; height: 20px; }
.actions i { width: 1px; height: 20px; background: #e3e3e3; }
.act { font-weight: 500; color: #5f6368; letter-spacing: -.13px; white-space: nowrap; padding-bottom: 2px; }
.del { margin-left: 36px; width: 112px; }
.not { margin-left: 20px; width: 82px; }
.actions .a1 { margin-left: 20px; }
.actions .a2 { margin-left: 24px; }
.actions .a3 { margin-left: 20px; }
.count { margin-left: auto; font-size: 12px; color: #5f6368; letter-spacing: -.3px; }
.actions .prev { margin-left: 20px; transform: scaleX(-1); color: #b0b0b0; }
.actions .next { margin-left: 20px; }
.actions .kbd { width: 18px; height: 12px; margin: 2px 0 0 18px; }
.actions .dn { width: 10px; height: 6px; margin: 0 37px 0 5px; }
.scroll { height: 473px; display: flex; }
.bar { width: 11px; background: #c9c9c9; border: solid #b5b5b5; border-width: 1px 0 1px 1px; }
.message { width: 1043px; }
.subject { height: 68px; display: flex; align-items: center; padding-left: 72px; color: #1f1f1f; }
.subject h1 { font-size: 22px; letter-spacing: -.68px; width: 342px; white-space: nowrap; padding-bottom: 2px; }
.chip { height: 18px; width: 52px; border-radius: 4px; background: #ddd; color: #666; font-size: 12px; letter-spacing: -.25px; display: flex; align-items: center; justify-content: space-between; padding: 0 4px; }
.chip svg { width: 8px; height: 8px; }
.sub-i { display: flex; gap: 16px; margin-left: auto; padding-right: 21px; fill: #444746; color: #444746; }
.sub-i svg { width: 20px; height: 20px; }
.sender { display: flex; height: 56px; padding-left: 16px; }
.avatar { width: 40px; height: 40px; border-radius: 50%; background: #616161; color: #fff; display: grid; place-items: center; }
.avatar svg { width: 20px; height: 20px; }
.who { margin-left: 16px; }
.who strong { display: block; font-size: 14px; font-weight: 600; line-height: 20px; color: #1f1f1f; letter-spacing: -.04px; }
.tome { display: flex; align-items: center; height: 20px; font-size: 12px; color: #5f6368; gap: 2px; letter-spacing: -.2px; }
.tome span { width: 16px; height: 16px; border: 1px solid #c8c8c8; border-radius: 3px; background: #e4e4e4; display: grid; place-items: center; fill: #444; }
.tome svg { width: 9px; height: 6px; }
.meta { height: 20px; display: flex; align-items: center; gap: 20px; margin-left: auto; padding-right: 21px; fill: #444746; }
.meta time { font-size: 12px; color: #5f6368; letter-spacing: -.34px; padding-bottom: 1px; }
.meta svg { width: 20px; height: 20px; }
.meta .grey { color: #aaa; fill: #aaa; }
.banner { margin: 0 21px 0 24px; height: 106px; border-radius: 8px; background: #e0e0e0; padding: 19px 26px 16px 24px; color: #333; }
.banner p { line-height: 20px; letter-spacing: -.26px; white-space: nowrap; }
.banner b { font-weight: 500; color: #1f1f1f; letter-spacing: -.17px; }
.brow { display: flex; align-items: center; justify-content: space-between; margin-top: 15px; }
.brow button { width: 142px; height: 36px; border: 1px solid #1f1f1f; border-radius: 4px; color: #1f1f1f; font-weight: 500; letter-spacing: -.08px; padding-bottom: 2px; }
.brow svg { width: 20px; height: 20px; color: #333; }
.verify { display: block; width: max-content; margin: 26px 0 0 72px; font: 13px/16px "Liberation Sans", sans-serif; color: #1155cc; text-decoration: underline; }
.replies { display: flex; gap: 8px; margin: 40px 0 0 72px; fill: #444746; }
.replies button { height: 36px; border: 1px solid #747775; border-radius: 18px; display: flex; align-items: center; font-weight: 500; letter-spacing: -.25px; }
.replies span { padding-bottom: 2px; }
.replies svg { width: 20px; height: 20px; margin-right: 8px; }
.replies .r { width: 104px; padding-left: 17px; }
.replies .f { width: 112px; padding-left: 12px; }
.replies .flip { transform: scaleX(-1); }
.replies .e { width: 36px; justify-content: center; border-color: #b0b0b0; color: #aaa; fill: #aaa; }
.replies .e svg { margin: 0; }
.rail { width: 56px; display: flex; flex-direction: column; align-items: center; padding-top: 18px; gap: 36px; font-family: Roboto, sans-serif; }
.rail svg { width: 20px; height: 20px; }
.rail i { width: 20px; height: 1px; background: #d8dadd; margin-top: -2px; }
.rail .add { margin-top: -2px; }
.rail .hide { margin-top: auto; margin-bottom: 2px; color: #1f1f1f; }

/* desktop taskbar */
.taskbar { height: 48px; background: #f0f0f0; border-top: 1px solid #dedede; display: flex; align-items: center; flex: none; font-family: "Noto Sans", sans-serif; font-size: 12px; color: #1f1f1f; }
.weather { width: 252px; display: flex; align-items: center; gap: 5px; padding-left: 20px; line-height: 16px; font-size: 11.5px; letter-spacing: -.4px; }
.weather .sub { color: #666; letter-spacing: .06px; }
.start { width: 23px; height: 23px; }
.tsearch { width: 219px; height: 32px; border-radius: 16px; background: #fbfbfb; border: 1px solid #dcdcdc; border-bottom-color: #c4c4c4; margin-left: 14px; display: flex; align-items: center; padding-left: 9px; font-size: 14px; color: #666; }
.tsearch span { margin-left: 9px; letter-spacing: -.4px; }
.autumn { margin-left: auto; margin-right: 3px; }
.apps { display: flex; margin-left: 2px; }
.apps div { position: relative; width: 44px; height: 39px; display: grid; place-items: center; }
.apps svg { position: relative; width: 24px; height: 24px; }
.apps .run::after, .apps .on::after { content: ""; position: absolute; bottom: 1px; left: 19px; width: 6px; height: 3px; border-radius: 2px; background: #868686; }
.apps .on::before { content: ""; position: absolute; left: 3px; top: 0; width: 38px; height: 39px; border-radius: 4px; background: #fafafa; border: 1px solid #e5e5e5; }
.apps .on::after { left: 14px; width: 16px; background: #0078d4; }
.tray { margin-left: auto; display: flex; align-items: center; padding-right: 18px; }
.up { width: 12px; height: 12px; margin-right: 18px; }
.wifi, .vol { width: 16px; height: 14px; margin-right: 8px; }
.bat { width: 17px; height: 14px; }
.clock { width: 65px; text-align: right; line-height: 16px; font-size: 11.5px; letter-spacing: -.32px; }
.badge { width: 20px; height: 16px; margin-left: 6px; border-radius: 8px; background: #0078d4; color: #fff; font-size: 11px; line-height: 16px; text-align: center; }
```
